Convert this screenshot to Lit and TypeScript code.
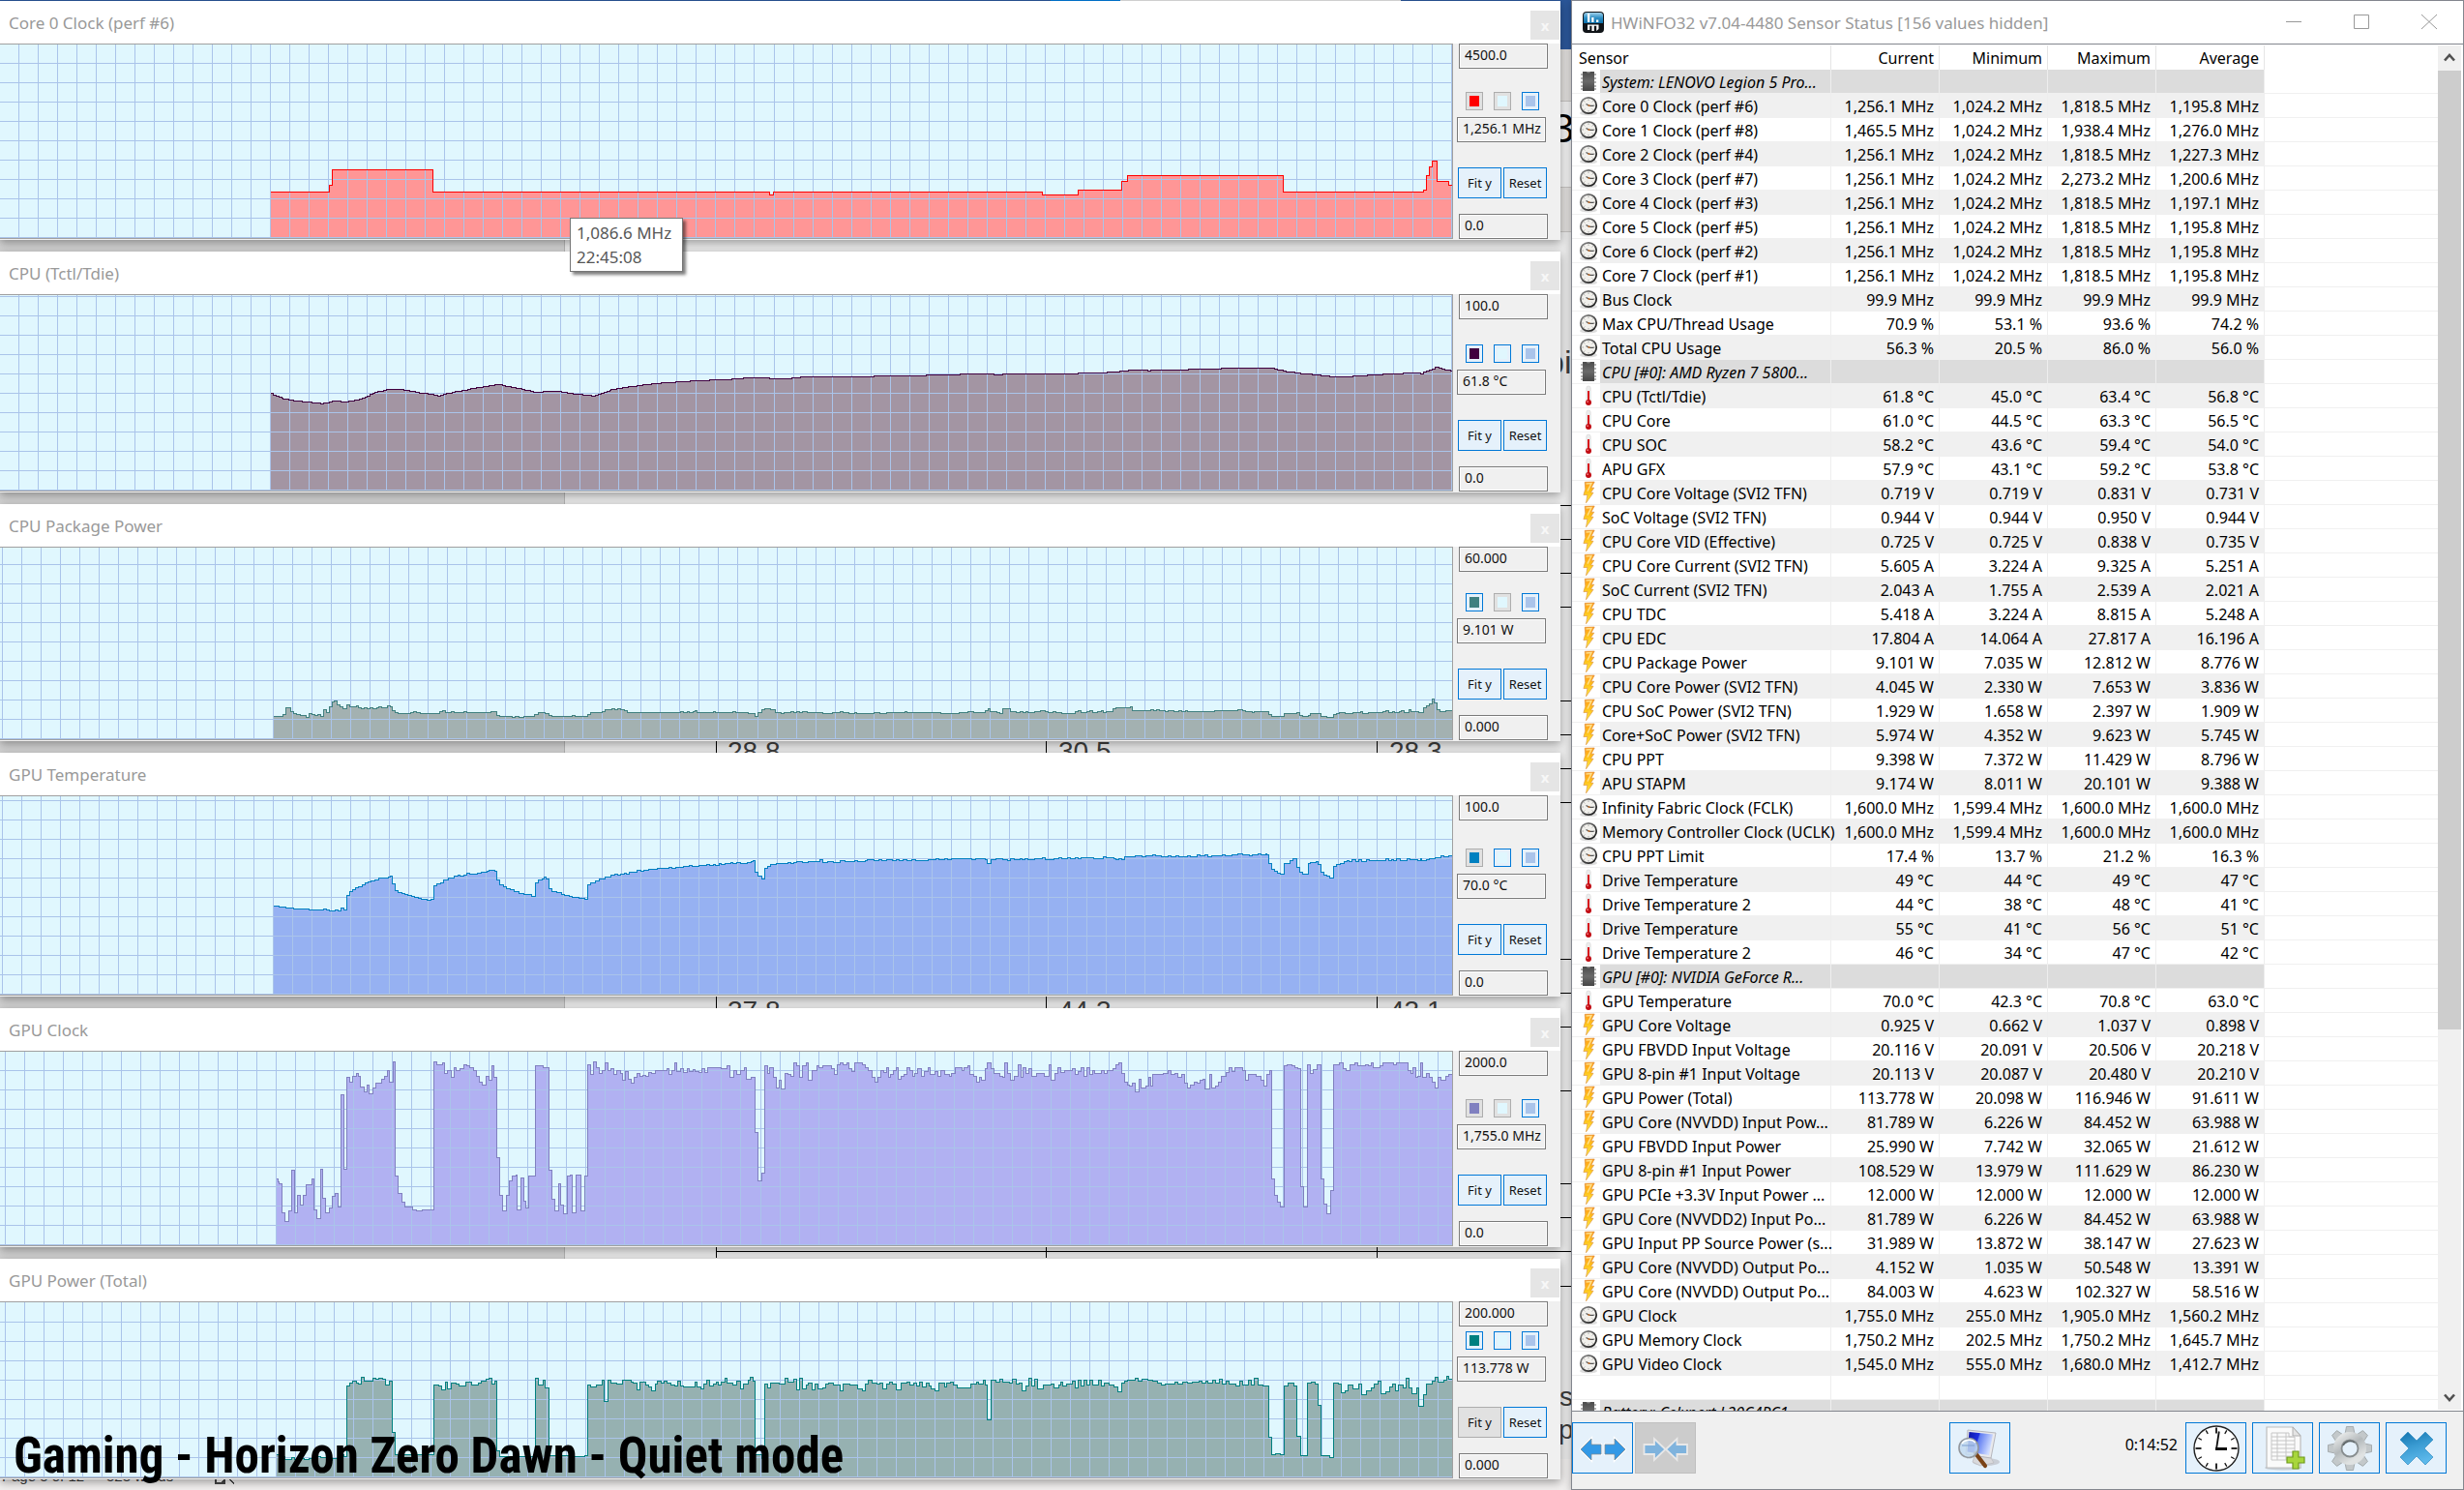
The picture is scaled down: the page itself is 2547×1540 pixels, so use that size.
import { LitElement, html, svg, css, nothing } from "lit";
import { customElement, property } from "lit/decorators.js";

type Trace = {
  title: string;
  top: string;
  value: string;
  bottom: string;
  stroke: string;
  fill: string;
  flat: boolean[];
  gridX: number;
  height: number;
  smooth?: boolean;
  fitIdle?: boolean;
  rise: number;
  early: string;
  late: string;
};

const PLOT_W = 1501;
const SPLIT = 850;
const KX_EARLY = SPLIT / 1568;
const KX_LATE = 800 / 1568;

const traces: Trace[] = [
  {
    title: "Core 0 Clock (perf #6)", top: "4500.0", value: "1,256.1 MHz", bottom: "0.0",
    stroke: "#ff0000", fill: "#ff9696", flat: [true, true, false], gridX: 19, height: 200, rise: 46,
    early: "516,595 628,574 634,526 825,595 1468,604 1475,595",
    late: "0,595 446,604 518,589 607,562 618,544 934,595 1218,589 1224,544 1230,517 1236,499 1246,562 1269,574",
  },
  {
    title: "CPU (Tctl/Tdie)", top: "100.0", value: "61.8 °C", bottom: "0.0",
    stroke: "#400040", fill: "#a395a3", flat: [false, false, false], gridX: 19, height: 202, rise: 305, smooth: true,
    early: "516,1218 522,1226 540,1237 560,1243 590,1247 612,1252 634,1244 660,1246 680,1241 700,1228 715,1217 740,1207 770,1209 800,1218 835,1227 870,1214 910,1202 948,1192 985,1204 1020,1216 1060,1213 1100,1223 1130,1228 1165,1208 1210,1197 1250,1189 1320,1181 1390,1176 1440,1170 1470,1174 1505,1173 1535,1168 1568,1168",
    late: "0,1168 100,1168 104,1165 205,1165 220,1162 330,1160 360,1162 380,1158 512,1158 590,1154 625,1148 660,1149 790,1144 840,1141 905,1141 940,1153 980,1160 1030,1168 1070,1167 1130,1161 1190,1157 1212,1158 1230,1148 1243,1138 1255,1145 1277,1150",
  },
  {
    title: "CPU Package Power", top: "60.000", value: "9.101 W", bottom: "0.000",
    stroke: "#408080", fill: "#a3b1b1", flat: [false, true, false], gridX: 2, height: 198, rise: 46,
    early: "522,661 540,655 545,634 554,646 560,652 566,655 572,658 583,664 589,652 595,655 600,658 606,655 611,661 617,640 622,649 628,631 634,616 638,613 643,625 649,631 654,637 661,625 666,631 680,628 683,634 689,637 695,634 700,637 706,634 712,637 718,634 722,631 728,634 739,628 745,631 748,643 754,649 760,652 783,649 789,646 795,649 801,652 838,646 844,643 850,649 861,646 867,649 884,646 890,649 936,646 947,658 953,661 976,664 982,661 990,664 998,661 1020,655 1027,649 1040,652 1046,658 1052,661 1092,658 1097,661 1121,655 1126,649 1149,646 1154,640 1167,637 1172,640 1178,637 1184,640 1190,643 1196,649 1298,646 1304,649 1310,646 1315,649 1321,646 1325,643 1329,649 1360,646 1365,649 1397,646 1402,649 1426,652 1440,661 1446,649 1452,640 1458,637 1470,640 1478,649 1489,652 1496,649 1508,646 1514,649 1519,646 1525,649 1531,646 1540,649",
    late: "0,652 20,649 36,646 42,649 54,652 66,649 70,652 105,649 116,652 130,649 167,646 172,649 240,652 277,649 295,646 306,649 330,643 336,637 341,646 354,649 360,652 366,637 382,646 392,649 400,646 406,649 412,646 417,649 430,646 442,643 452,646 458,649 468,646 474,649 486,652 513,646 519,643 524,649 536,646 542,643 548,649 558,646 565,643 569,649 576,646 588,637 595,634 624,631 628,643 665,640 671,643 677,640 683,643 694,646 700,643 713,646 722,643 728,646 735,643 740,646 795,643 842,640 852,643 858,646 871,649 876,646 905,655 911,661 935,652 962,649 968,658 974,661 984,658 989,652 1010,661 1022,664 1036,655 1042,652 1047,649 1060,652 1075,649 1090,646 1094,652 1106,649 1136,646 1142,643 1147,649 1155,646 1160,649 1170,646 1174,643 1178,649 1188,640 1193,646 1208,649 1218,634 1224,628 1230,622 1236,607 1240,619 1246,640 1252,646 1264,643",
  },
  {
    title: "GPU Temperature", top: "100.0", value: "70.0 °C", bottom: "0.0",
    stroke: "#0080c0", fill: "#96b1f2", flat: [true, false, false], gridX: 2, height: 205, rise: 303,
    early: "522,1249 532,1252 545,1255 560,1258 589,1261 617,1258 622,1261 628,1264 640,1261 645,1264 650,1255 655,1261 661,1216 667,1204 672,1198 678,1192 684,1189 690,1183 696,1177 702,1174 708,1171 714,1168 722,1162 740,1159 745,1156 748,1180 754,1201 760,1207 766,1210 772,1213 778,1216 784,1219 790,1222 798,1225 804,1228 815,1231 822,1228 827,1186 833,1180 840,1177 845,1168 855,1162 867,1156 873,1153 878,1156 884,1153 890,1147 896,1150 911,1147 917,1144 928,1141 933,1138 943,1141 947,1168 953,1183 960,1189 965,1195 973,1198 980,1204 990,1210 998,1213 1014,1219 1021,1177 1027,1168 1034,1165 1038,1159 1042,1165 1047,1195 1053,1204 1062,1207 1070,1213 1076,1216 1086,1219 1092,1222 1104,1225 1115,1228 1121,1183 1127,1177 1136,1171 1143,1165 1154,1159 1165,1153 1172,1150 1177,1153 1184,1150 1190,1147 1194,1150 1200,1144 1215,1138 1222,1141 1228,1138 1237,1135 1254,1132 1276,1129 1282,1132 1288,1129 1304,1126 1315,1123 1320,1126 1332,1123 1348,1120 1353,1123 1360,1120 1365,1123 1371,1117 1376,1120 1382,1117 1393,1114 1397,1117 1404,1114 1412,1117 1425,1114 1432,1111 1436,1108 1440,1144 1446,1156 1452,1165 1458,1132 1464,1126 1470,1120 1480,1117 1503,1114 1508,1117 1514,1114 1520,1111 1530,1114 1541,1111 1563,1105",
    late: "0,1114 10,1111 22,1114 36,1108 46,1111 66,1108 72,1111 88,1108 92,1105 104,1108 114,1105 120,1108 130,1105 142,1108 150,1105 156,1108 164,1105 172,1108 182,1105 190,1108 215,1105 230,1102 236,1105 248,1102 254,1105 262,1102 302,1105 310,1102 330,1105 334,1117 342,1105 352,1102 366,1105 376,1108 382,1102 390,1105 400,1102 404,1105 410,1102 416,1105 430,1102 446,1099 452,1105 470,1102 480,1099 486,1102 496,1099 502,1102 512,1099 518,1102 524,1099 550,1102 570,1096 576,1099 590,1102 594,1105 600,1102 606,1105 612,1096 635,1093 648,1096 656,1093 670,1090 676,1093 686,1096 700,1093 706,1096 717,1093 722,1096 740,1093 746,1096 760,1090 766,1093 776,1090 782,1096 788,1093 810,1090 816,1093 830,1090 842,1087 852,1090 866,1093 872,1090 882,1087 888,1090 898,1087 900,1090 905,1117 911,1135 917,1141 922,1147 929,1150 936,1117 948,1108 954,1102 962,1129 968,1144 974,1150 984,1117 989,1114 1000,1111 1005,1120 1010,1144 1016,1153 1022,1156 1028,1162 1036,1126 1042,1120 1050,1117 1058,1111 1064,1108 1068,1111 1074,1105 1080,1111 1086,1105 1092,1111 1102,1105 1108,1108 1142,1102 1148,1108 1154,1105 1158,1108 1164,1102 1172,1108 1184,1102 1190,1105 1206,1108 1212,1102 1214,1108 1224,1105 1230,1102 1242,1099 1253,1093 1260,1096 1270,1093",
  },
  {
    title: "GPU Clock", top: "2000.0", value: "1,755.0 MHz", bottom: "0.0",
    stroke: "#8080c0", fill: "#b1b1f2", flat: [true, true, false], gridX: 5, height: 200, rise: 47,
    early: "527,535 530,544 532,550 538,640 544,667 551,634 556,508 561,640 567,586 572,616 578,586 584,553 595,535 599,631 604,658 611,505 615,595 621,640 628,625 634,589 640,580 644,622 650,274 655,505 661,220 666,235 673,217 680,208 684,217 688,250 694,265 700,244 704,271 712,253 717,238 727,226 733,217 739,199 743,235 750,172 753,526 760,580 766,607 772,622 787,631 794,634 805,631 827,172 832,181 844,175 848,208 854,199 860,220 866,190 870,199 878,193 884,181 890,184 896,190 903,199 909,217 914,235 920,244 927,217 933,229 938,184 942,220 947,469 953,586 959,634 966,586 972,541 977,526 984,523 986,631 993,532 998,604 1003,625 1009,526 1021,184 1036,190 1047,508 1052,598 1058,634 1065,550 1069,616 1075,643 1082,526 1087,523 1091,640 1099,523 1108,634 1115,526 1121,181 1126,211 1132,172 1137,190 1142,208 1148,199 1154,175 1159,199 1165,193 1170,211 1176,199 1184,208 1187,229 1193,202 1199,226 1204,238 1210,220 1215,208 1220,217 1226,214 1232,217 1237,205 1243,208 1249,199 1272,193 1276,211 1282,199 1287,175 1291,202 1298,193 1303,205 1310,193 1315,202 1321,196 1326,202 1332,205 1338,193 1344,205 1350,190 1376,193 1387,184 1392,220 1400,199 1404,211 1412,199 1420,190 1424,226 1432,220 1440,391 1446,541 1452,517 1458,184 1463,208 1468,190 1475,220 1480,253 1486,229 1490,256 1497,208 1503,211 1508,217 1514,175 1520,184 1525,220 1530,184 1537,175 1541,229 1548,199 1558,184 1562,190",
    late: "0,184 18,193 24,211 30,181 36,175 42,181 50,175 54,193 60,202 66,175 82,181 88,190 94,199 100,220 106,235 112,220 118,199 124,205 130,190 134,220 138,211 144,199 149,190 153,226 160,217 166,211 172,190 178,199 184,217 188,208 194,193 200,217 206,202 214,190 218,211 228,202 234,217 240,199 247,211 258,217 262,208 270,190 284,199 288,190 294,184 298,211 306,217 312,235 318,220 322,229 330,193 335,175 342,193 348,208 360,217 366,220 370,175 376,208 382,229 390,217 396,181 402,220 406,190 412,208 418,193 424,217 434,208 450,217 460,181 464,229 472,208 478,190 484,205 490,199 506,193 512,211 518,202 524,190 530,217 536,190 542,211 548,199 552,208 566,199 572,208 578,199 588,193 594,181 600,175 606,208 612,235 618,244 622,247 628,238 634,265 641,226 646,253 656,247 662,220 666,247 670,211 690,208 700,199 706,211 714,208 720,220 728,211 734,238 740,253 746,244 754,235 760,238 766,229 772,226 776,256 784,211 788,253 796,247 802,235 808,217 818,205 824,190 830,202 836,190 852,199 858,229 864,211 880,217 888,229 894,247 900,211 906,199 910,535 916,586 922,607 929,622 936,184 942,181 952,184 958,190 964,193 969,559 975,622 983,181 988,208 995,196 1002,181 1010,535 1016,613 1022,643 1030,571 1036,181 1048,175 1056,193 1062,199 1070,181 1078,175 1084,184 1100,181 1106,184 1112,175 1116,190 1130,184 1136,175 1158,181 1164,175 1187,199 1192,208 1197,190 1202,220 1207,217 1212,175 1217,220 1224,208 1230,220 1236,235 1241,253 1247,220 1253,229 1264,217 1270,211",
  },
  {
    title: "GPU Power (Total)", top: "200.000", value: "113.778 W", bottom: "0.000",
    stroke: "#008080", fill: "#96b1b1", flat: [false, false, false], gridX: 5, height: 181, rise: 306, fitIdle: true,
    early: "527,1390 533,1396 544,1405 557,1399 562,1405 575,1402 580,1405 590,1402 600,1396 611,1399 628,1408 634,1402 650,1390 655,1396 661,1177 667,1168 673,1162 680,1168 684,1171 689,1150 694,1162 711,1153 717,1156 723,1153 730,1156 736,1174 743,1162 748,1321 753,1390 827,1174 836,1177 842,1189 850,1165 854,1186 860,1168 870,1171 876,1177 888,1165 900,1174 912,1168 918,1162 927,1156 933,1153 938,1171 943,1162 947,1378 953,1396 1021,1153 1026,1174 1036,1159 1040,1183 1047,1393 1090,1396 1115,1393 1121,1174 1126,1180 1138,1174 1148,1159 1152,1225 1160,1159 1165,1168 1176,1171 1187,1159 1204,1165 1208,1168 1214,1189 1221,1165 1232,1174 1237,1180 1243,1192 1249,1171 1254,1162 1260,1168 1266,1162 1272,1168 1280,1174 1287,1177 1292,1162 1298,1177 1304,1180 1325,1165 1330,1180 1337,1186 1342,1171 1348,1159 1353,1177 1360,1171 1366,1165 1370,1174 1376,1165 1382,1153 1386,1168 1398,1174 1404,1162 1412,1186 1418,1171 1426,1159 1431,1150 1436,1162 1440,1390 1452,1402 1458,1171 1463,1183 1470,1168 1486,1171 1497,1153 1503,1165 1514,1156 1519,1189 1525,1153 1530,1186 1537,1174 1542,1168 1548,1189 1554,1171 1560,1186",
    late: "0,1183 6,1171 12,1168 22,1174 36,1192 42,1171 56,1174 72,1186 82,1192 88,1171 94,1159 100,1168 110,1171 116,1168 122,1186 130,1171 136,1165 142,1171 150,1189 160,1168 172,1165 178,1174 186,1168 192,1177 196,1165 202,1180 210,1168 216,1177 220,1186 228,1192 236,1168 248,1180 252,1168 260,1165 266,1174 274,1183 300,1171 312,1165 316,1171 326,1159 330,1174 334,1282 342,1159 352,1165 360,1156 366,1165 380,1168 386,1156 392,1171 398,1168 404,1192 412,1177 418,1153 424,1177 430,1156 436,1186 448,1174 464,1171 470,1183 480,1174 484,1165 488,1177 494,1171 506,1162 512,1183 518,1159 524,1177 530,1159 536,1174 542,1159 548,1174 560,1159 566,1177 572,1168 582,1174 590,1180 598,1195 606,1168 612,1162 618,1159 634,1153 640,1162 648,1156 660,1159 670,1162 680,1168 686,1174 694,1171 714,1165 720,1171 730,1165 740,1168 750,1165 764,1162 770,1168 778,1162 782,1168 790,1159 796,1168 804,1156 810,1171 818,1162 824,1171 838,1177 846,1162 852,1174 864,1159 870,1174 876,1153 882,1174 892,1177 905,1336 911,1390 918,1387 928,1390 936,1177 944,1168 956,1177 962,1333 969,1393 983,1168 990,1165 998,1171 1004,1237 1010,1393 1028,1399 1036,1168 1046,1171 1052,1198 1060,1192 1066,1174 1076,1186 1086,1171 1092,1204 1102,1192 1112,1183 1118,1171 1126,1162 1132,1201 1142,1195 1150,1180 1156,1171 1162,1192 1168,1174 1176,1183 1182,1153 1188,1183 1194,1201 1204,1183 1209,1240 1218,1204 1224,1171 1236,1162 1242,1150 1248,1165 1260,1159 1266,1147 1270,1156",
  },
];

/* Turns both halves of a recording into [x, y] plot pixels. */
function samples(t: Trace): number[][] {
  const read = (s: string, x0: number, kx: number) =>
    s.split(" ").map((p) => {
      const [x, y] = p.split(",").map(Number);
      return [x0 + Math.floor(x * kx), y / 3 - t.rise];
    });
  const pts = [...read(t.early, 0, KX_EARLY), ...read(t.late, SPLIT, KX_LATE)];
  if (!t.smooth) return pts.map(([x, y]) => [x, Math.floor(y)]);
  const out: number[][] = [];
  for (let i = 0; i < pts.length - 1; i++) {
    const [x1, y1] = pts[i];
    const [x2, y2] = pts[i + 1];
    for (let x = x1; x < x2; x += 3) out.push([x, Math.floor(y1 + ((y2 - y1) * (x - x1)) / (x2 - x1))]);
  }
  return out;
}

function stepPath(pts: number[][]): string {
  let d = `M${pts[0][0] + 0.5} ${pts[0][1] + 0.5}`;
  for (const [x, y] of pts.slice(1)) d += `H${x + 0.5}V${y + 0.5}`;
  return d + `H${PLOT_W}`;
}

@customElement("trace-window")
class TraceWindow extends LitElement {
  @property({ attribute: false }) trace!: Trace;

  static styles = css`
    :host {
      display: flex;
      flex-direction: column;
      min-width: 0;
      min-height: 0;
      background: #f0f0f0;
      box-shadow: 0 3px 9px rgba(0, 0, 0, 0.35);
      font-family: "Noto Sans", "Open Sans", sans-serif;
    }
    .bar {
      flex: 0 0 44px;
      display: flex;
      align-items: center;
      justify-content: space-between;
      padding: 0 1px 0 9px;
      background: #fff;
    }
    .title { margin: 0; padding-top: 2px; font-size: 17px; font-weight: 400; line-height: 24px; color: #999; }
    .close {
      width: 30px; height: 30px; padding: 0; margin-top: 6px;
      border: 0; background: #e5e5e5; color: #f7f7f7;
      font: 700 15px/28px "Noto Sans", sans-serif;
    }
    .body { flex: 1; min-height: 0; display: grid; grid-template-columns: minmax(0, 1fr) 111px; }
    .plot {
      min-height: 0;
      margin-bottom: 1px;
      border: solid #a0a0a0;
      border-width: 1px 1px 1px 0;
      background: #e0f7fe;
    }
    .plot svg { display: block; width: 100%; height: 100%; }
    .side { display: flex; flex-direction: column; align-items: flex-start; padding: 0 0 1px 4px; }
    .field {
      box-sizing: border-box; width: 92px; height: 26px; padding: 0 0 3px 5px;
      border: 1px solid #7a7a7a; box-shadow: inset 0 0 0 1px #fff; background: #f0f0f0;
      font: 14px/20px "Noto Sans", sans-serif; color: #111;
    }
    .limit { margin-left: 2px; }
    .swatches { display: flex; margin-top: auto; padding-left: 9px; gap: 11px; }
    .swatch {
      box-sizing: border-box; width: 18px; height: 19px; padding: 3px;
      border: 1px solid #0078d7; background: #e5f1fb;
    }
    .swatch.flat { border-color: #adadad; background: #e1e1e1; }
    .chip { display: block; height: 100%; }
    .value { margin: 7px 0 26px; }
    .actions { display: flex; gap: 2px; margin: 0 0 16px 1px; }
    .act {
      box-sizing: border-box; width: 45px; height: 32px; padding: 0 0 1px;
      border: 1px solid #0078d7; background: #e5f1fb;
      font: 13px/20px "Noto Sans", sans-serif; color: #111;
    }
    .act.flat { border-color: #adadad; background: #e1e1e1; }
  `;

  render() {
    const t = this.trace;
    const line = stepPath(samples(t));
    const start = line.slice(1).split(" ")[0];
    let grid = "";
    for (let k = 0; ; k++) {
      const x = t.gridX + Math.round(k * 20.013);
      if (x >= PLOT_W) break;
      grid += `M${x + 0.5} 0V${t.height}`;
    }
    for (let y = t.height - 1; y > 0; y -= 20) grid += `M0 ${y + 0.5}H${PLOT_W}`;
    const colors = [t.stroke, "#e0f7fe", "#aac4ea"];
    return html`
      <header class="bar">
        <h2 class="title">${t.title}</h2>
        <button class="close" aria-label="Close">x</button>
      </header>
      <div class="body">
        <div class="plot">
          <svg viewBox="0 0 ${PLOT_W} ${t.height}" preserveAspectRatio="none" shape-rendering="crispEdges" role="img" aria-label=${t.title}>
            <path d="${line}V${t.height}H${start}Z" fill=${t.fill}></path>
            <path d=${grid} stroke="#aac4ea" fill="none"></path>
            <path d=${line} stroke=${t.stroke} fill="none"></path>
          </svg>
        </div>
        <div class="side">
          <input class="field limit" aria-label="Upper limit" .value=${t.top} />
          <div class="swatches">
            ${colors.map((c, i) => html`
              <button class="swatch ${t.flat[i] ? "flat" : ""}" aria-label="Color ${i + 1}">
                <span class="chip" style="background:${c}"></span>
              </button>`)}
          </div>
          <input class="field value" aria-label="Current value" readonly .value=${t.value} />
          <div class="actions">
            <button class="act ${t.fitIdle ? "flat" : ""}">Fit y</button>
            <button class="act">Reset</button>
          </div>
          <input class="field limit" aria-label="Lower limit" .value=${t.bottom} />
        </div>
      </div>`;
  }
}

type Row = string[];
const rows: Row[] = [
  ["chip", "System: LENOVO Legion 5 Pro..."],
  ["dial", "Core 0 Clock (perf #6)", "1,256.1 MHz", "1,024.2 MHz", "1,818.5 MHz", "1,195.8 MHz"],
  ["dial", "Core 1 Clock (perf #8)", "1,465.5 MHz", "1,024.2 MHz", "1,938.4 MHz", "1,276.0 MHz"],
  ["dial", "Core 2 Clock (perf #4)", "1,256.1 MHz", "1,024.2 MHz", "1,818.5 MHz", "1,227.3 MHz"],
  ["dial", "Core 3 Clock (perf #7)", "1,256.1 MHz", "1,024.2 MHz", "2,273.2 MHz", "1,200.6 MHz"],
  ["dial", "Core 4 Clock (perf #3)", "1,256.1 MHz", "1,024.2 MHz", "1,818.5 MHz", "1,197.1 MHz"],
  ["dial", "Core 5 Clock (perf #5)", "1,256.1 MHz", "1,024.2 MHz", "1,818.5 MHz", "1,195.8 MHz"],
  ["dial", "Core 6 Clock (perf #2)", "1,256.1 MHz", "1,024.2 MHz", "1,818.5 MHz", "1,195.8 MHz"],
  ["dial", "Core 7 Clock (perf #1)", "1,256.1 MHz", "1,024.2 MHz", "1,818.5 MHz", "1,195.8 MHz"],
  ["dial", "Bus Clock", "99.9 MHz", "99.9 MHz", "99.9 MHz", "99.9 MHz"],
  ["dial", "Max CPU/Thread Usage", "70.9 %", "53.1 %", "93.6 %", "74.2 %"],
  ["dial", "Total CPU Usage", "56.3 %", "20.5 %", "86.0 %", "56.0 %"],
  ["chip", "CPU [#0]: AMD Ryzen 7 5800..."],
  ["temp", "CPU (Tctl/Tdie)", "61.8 °C", "45.0 °C", "63.4 °C", "56.8 °C"],
  ["temp", "CPU Core", "61.0 °C", "44.5 °C", "63.3 °C", "56.5 °C"],
  ["temp", "CPU SOC", "58.2 °C", "43.6 °C", "59.4 °C", "54.0 °C"],
  ["temp", "APU GFX", "57.9 °C", "43.1 °C", "59.2 °C", "53.8 °C"],
  ["bolt", "CPU Core Voltage (SVI2 TFN)", "0.719 V", "0.719 V", "0.831 V", "0.731 V"],
  ["bolt", "SoC Voltage (SVI2 TFN)", "0.944 V", "0.944 V", "0.950 V", "0.944 V"],
  ["bolt", "CPU Core VID (Effective)", "0.725 V", "0.725 V", "0.838 V", "0.735 V"],
  ["bolt", "CPU Core Current (SVI2 TFN)", "5.605 A", "3.224 A", "9.325 A", "5.251 A"],
  ["bolt", "SoC Current (SVI2 TFN)", "2.043 A", "1.755 A", "2.539 A", "2.021 A"],
  ["bolt", "CPU TDC", "5.418 A", "3.224 A", "8.815 A", "5.248 A"],
  ["bolt", "CPU EDC", "17.804 A", "14.064 A", "27.817 A", "16.196 A"],
  ["bolt", "CPU Package Power", "9.101 W", "7.035 W", "12.812 W", "8.776 W"],
  ["bolt", "CPU Core Power (SVI2 TFN)", "4.045 W", "2.330 W", "7.653 W", "3.836 W"],
  ["bolt", "CPU SoC Power (SVI2 TFN)", "1.929 W", "1.658 W", "2.397 W", "1.909 W"],
  ["bolt", "Core+SoC Power (SVI2 TFN)", "5.974 W", "4.352 W", "9.623 W", "5.745 W"],
  ["bolt", "CPU PPT", "9.398 W", "7.372 W", "11.429 W", "8.796 W"],
  ["bolt", "APU STAPM", "9.174 W", "8.011 W", "20.101 W", "9.388 W"],
  ["dial", "Infinity Fabric Clock (FCLK)", "1,600.0 MHz", "1,599.4 MHz", "1,600.0 MHz", "1,600.0 MHz"],
  ["dial", "Memory Controller Clock (UCLK)", "1,600.0 MHz", "1,599.4 MHz", "1,600.0 MHz", "1,600.0 MHz"],
  ["dial", "CPU PPT Limit", "17.4 %", "13.7 %", "21.2 %", "16.3 %"],
  ["temp", "Drive Temperature", "49 °C", "44 °C", "49 °C", "47 °C"],
  ["temp", "Drive Temperature 2", "44 °C", "38 °C", "48 °C", "41 °C"],
  ["temp", "Drive Temperature", "55 °C", "41 °C", "56 °C", "51 °C"],
  ["temp", "Drive Temperature 2", "46 °C", "34 °C", "47 °C", "42 °C"],
  ["chip", "GPU [#0]: NVIDIA GeForce R..."],
  ["temp", "GPU Temperature", "70.0 °C", "42.3 °C", "70.8 °C", "63.0 °C"],
  ["bolt", "GPU Core Voltage", "0.925 V", "0.662 V", "1.037 V", "0.898 V"],
  ["bolt", "GPU FBVDD Input Voltage", "20.116 V", "20.091 V", "20.506 V", "20.218 V"],
  ["bolt", "GPU 8-pin #1 Input Voltage", "20.113 V", "20.087 V", "20.480 V", "20.210 V"],
  ["bolt", "GPU Power (Total)", "113.778 W", "20.098 W", "116.946 W", "91.611 W"],
  ["bolt", "GPU Core (NVVDD) Input Pow...", "81.789 W", "6.226 W", "84.452 W", "63.988 W"],
  ["bolt", "GPU FBVDD Input Power", "25.990 W", "7.742 W", "32.065 W", "21.612 W"],
  ["bolt", "GPU 8-pin #1 Input Power", "108.529 W", "13.979 W", "111.629 W", "86.230 W"],
  ["bolt", "GPU PCIe +3.3V Input Power ...", "12.000 W", "12.000 W", "12.000 W", "12.000 W"],
  ["bolt", "GPU Core (NVVDD2) Input Po...", "81.789 W", "6.226 W", "84.452 W", "63.988 W"],
  ["bolt", "GPU Input PP Source Power (s...", "31.989 W", "13.872 W", "38.147 W", "27.623 W"],
  ["bolt", "GPU Core (NVVDD) Output Po...", "4.152 W", "1.035 W", "50.548 W", "13.391 W"],
  ["bolt", "GPU Core (NVVDD) Output Po...", "84.003 W", "4.623 W", "102.327 W", "58.516 W"],
  ["dial", "GPU Clock", "1,755.0 MHz", "255.0 MHz", "1,905.0 MHz", "1,560.2 MHz"],
  ["dial", "GPU Memory Clock", "1,750.2 MHz", "202.5 MHz", "1,750.2 MHz", "1,645.7 MHz"],
  ["dial", "GPU Video Clock", "1,545.0 MHz", "555.0 MHz", "1,680.0 MHz", "1,412.7 MHz"],
  ["", ""],
  ["chip", "Battery: Celxpert L20C4PC1"],
];

const ticks = Array.from({ length: 12 }, (_, i) => i);
const gearTeeth = Array.from({ length: 8 }, (_, i) => i * 45);

@customElement("sensor-window")
class SensorWindow extends LitElement {
  static styles = css`
    :host {
      display: flex;
      flex-direction: column;
      min-width: 0;
      min-height: 0;
      border: 1px solid #83868e;
      background: #f0f0f0;
      box-shadow: 0 2px 8px rgba(0, 0, 0, 0.3);
      font-family: "Noto Sans", "Open Sans", sans-serif;
      color: #000;
    }
    .defs { position: absolute; width: 0; height: 0; }
    .bar { flex: 0 0 44px; display: flex; align-items: center; background: #fff; padding-left: 11px; gap: 7px; }
    .logo { width: 22px; height: 22px; }
    .title { flex: 1; margin: 0; padding-top: 2px; font-size: 17px; font-weight: 400; line-height: 24px; color: #999; white-space: nowrap; }
    .caps { display: flex; }
    .cap { width: 70px; height: 44px; padding: 0; border: 0; background: none; }
    .cap svg { display: block; width: 18px; height: 18px; margin: 0 auto; }
    .list { flex: 1; min-height: 0; display: flex; border: solid #83868e; border-width: 1px 0; background: #fff; }
    .scroll { flex: 1; min-width: 0; overflow: hidden; padding-top: 1px; }
    .grid { width: 100%; border-collapse: separate; border-spacing: 0; table-layout: fixed; font-size: 16px; line-height: 24px; }
    .grid th { height: 25px; padding: 0 5px 0 0; text-align: right; font-weight: 400; border-right: 1px solid #e5e5e5; }
    .grid .first { text-align: left; padding-left: 7px; }
    .grid .fill { border-right: 0; padding: 0; }
    .grid td {
      box-sizing: border-box; height: 25px; padding: 2px 5px 0 0; line-height: 22px;
      text-align: right; white-space: nowrap;
      border-right: 1px solid #eee; border-bottom: 1px solid #f0f0f0;
    }
    .grid .icon { padding: 0 0 0 7px; border-right: 0; text-align: left; line-height: 0; }
    .icon svg { width: 21px; height: 24px; }
    .grid .name { position: relative; padding-left: 2px; padding-right: 0; text-align: left; }
    .odd .cell { background: #f0f0f0; }
    .group .cell { background: #dcdcdc; }
    .group .name { font-style: italic; }
    .c-icon { width: 29px; }
    .c-name { width: 239px; }
    .c-val { width: 112px; }
    .track { flex: 0 0 24px; margin: 1px 2px 1px 0; display: flex; flex-direction: column; background: #f0f0f0; }
    .arrow { flex: 0 0 26px; padding: 0; border: 0; background: none; }
    .arrow svg { display: block; width: 12px; height: 12px; margin: 0 auto; }
    .rail { flex: 1; }
    .thumb { height: 73%; background: #cdcdcd; }
    .tools {
      flex: 0 0 80px; box-sizing: border-box; display: grid; padding: 11px 17px 0 0;
      grid-template-columns: auto 261fr auto 118fr auto; align-items: start;
    }
    .set { display: flex; gap: 6px; }
    .set.tight { gap: 2px; }
    .tool { width: 63px; height: 53px; padding: 0; border: 1px solid #0078d7; background: #e5f1fb; }
    .tool svg { display: block; width: 48px; height: 48px; margin: 0 auto; }
    .tool:disabled { border-color: #bfbfbf; background: #ccc; }
    .time { font-size: 16px; line-height: 46px; margin-right: 2px; }
  `;

  render() {
    return html`
      <svg class="defs" aria-hidden="true">
        <defs>
          <linearGradient id="gChip" x1="0" y1="0" x2="0" y2="1"><stop offset="0" stop-color="#4c4c4c"/><stop offset=".5" stop-color="#6a6a6a"/><stop offset="1" stop-color="#454545"/></linearGradient>
          <linearGradient id="gDial" x1="0" y1="0" x2="1" y2="1"><stop offset="0" stop-color="#8d8d8d"/><stop offset="1" stop-color="#111"/></linearGradient>
          <linearGradient id="gBolt" x1="0" y1="0" x2="0" y2="1"><stop offset="0" stop-color="#ff9a1f"/><stop offset=".45" stop-color="#ffc21a"/><stop offset="1" stop-color="#fff04a"/></linearGradient>
          <symbol id="chip" viewBox="0 0 21 24">
            <path d="M2 5h16M2 9h16M2 13h16M2 17h16M2 20h16" stroke="#9a9a9a" stroke-width="1.6"/>
            <path d="M4 2h12v20H4z" fill="url(#gChip)"/><path d="M8 2a2 1.6 0 0 0 4 0z" fill="#8b8b8b"/>
          </symbol>
          <symbol id="dial" viewBox="0 0 21 24">
            <ellipse cx="10" cy="20" rx="9" ry="2.5" fill="#ddd"/>
            <circle cx="10" cy="12" r="8.2" fill="#f1f0ec" stroke="url(#gDial)" stroke-width="1.8"/>
            <path d="M10 5.5v1.3M10 17.2v1.3M3.5 12h1.3M15.2 12h1.3M5.5 7.5l.8.8M14.5 7.5l-.8.8M5.5 16.5l.8-.8M14.5 16.5l-.8-.8" stroke="#999" stroke-width="1"/>
            <path d="M10.500 12.300h5M7.500 10.500l3.500 1.800" stroke="#555" stroke-width="1.300"/><circle cx="10.500" cy="12" r="1.100" fill="#c7783a"/>
          </symbol>
          <symbol id="temp" viewBox="0 0 21 24">
            <rect x="7.800" y="2" width="4.400" height="17" rx="2.200" fill="#ececec" stroke="#d5d5d5" stroke-width=".6"/>
            <path d="M9 7h2v11H9z" fill="#d8141c"/><circle cx="10" cy="19" r="3" fill="#c20d14"/><circle cx="9.100" cy="18.200" r=".9" fill="#f27a7d"/>
          </symbol>
          <symbol id="bolt" viewBox="0 0 21 24">
            <path d="M6.200 1.300L16.200 1l-3.400 6.200h3L12.300 12l2.700.3L7.500 22.800l1.400-8.400-4 .2 1.800-6.200z" fill="url(#gBolt)" stroke="#d98a35" stroke-width=".6"/>
            <path d="M7.500 3l5.500-.4-4 8" fill="none" stroke="#ffe08a" stroke-width="1.400"/>
          </symbol>
        </defs>
      </svg>
      <header class="bar">
        <svg class="logo" viewBox="0 0 22 22" aria-hidden="true">
          <defs><linearGradient id="gLogo" x1="0" y1="0" x2="0" y2="1"><stop offset="0" stop-color="#9fd0ea"/><stop offset=".5" stop-color="#2f8fc4"/><stop offset="1" stop-color="#0c6ea8"/></linearGradient></defs>
          <rect width="22" height="22" rx="4" fill="#101418"/>
          <path d="M1 12V4a3 3 0 0 1 3-3h14a3 3 0 0 1 3 3v8z" fill="url(#gLogo)"/>
          <path d="M5 2h2.300v9H5zM9.200 6h2.300v5H9.200zM14 8.500h2.300V11H14zM5 13.500h11.500v1.300H5zM5 14h2.300v5H5zM9.400 14h2.400v6H9.400zM14.200 14h2.300v4l-2.300 2z" fill="#fff"/>
        </svg>
        <h1 class="title">HWiNFO32 v7.04-4480 Sensor Status [156 values hidden]</h1>
        <div class="caps">
          <button class="cap" aria-label="Minimize"><svg viewBox="0 0 18 18"><path d="M1 8.500h16" stroke="#999"/></svg></button>
          <button class="cap" aria-label="Maximize"><svg viewBox="0 0 18 18"><path d="M1.500 1.500h15v14h-15z" stroke="#999" fill="none"/></svg></button>
          <button class="cap" aria-label="Close"><svg viewBox="0 0 18 18"><path d="M1 1l16 15M17 1L1 16" stroke="#999" fill="none"/></svg></button>
        </div>
      </header>
      <div class="list">
        <div class="scroll">
          <table class="grid">
            <colgroup><col class="c-icon" /><col class="c-name" /><col class="c-val" /><col class="c-val" /><col class="c-val" /><col class="c-val" /><col /></colgroup>
            <thead>
              <tr><th class="first" colspan="2">Sensor</th><th>Current</th><th>Minimum</th><th>Maximum</th><th>Average</th><th class="fill"></th></tr>
            </thead>
            <tbody>
              ${rows.map(([kind, name, ...vals], i) => html`
                <tr class=${kind === "chip" ? "group" : kind && i % 2 ? "odd" : ""}>
                  <td class="icon">${kind ? html`<svg aria-hidden="true"><use href="#${kind}"></use></svg>` : nothing}</td>
                  <td class="cell name">${name}</td>
                  ${[0, 1, 2, 3].map((c) => html`<td class="cell">${vals[c] ?? ""}</td>`)}
                  <td class="fill"></td>
                </tr>`)}
            </tbody>
          </table>
        </div>
        <div class="track">
          <button class="arrow" aria-label="Scroll up"><svg viewBox="0 0 12 12"><path d="M1 8.500L6 3l5 5.500" fill="none" stroke="#505050" stroke-width="2.600"/></svg></button>
          <div class="rail"><div class="thumb"></div></div>
          <button class="arrow" aria-label="Scroll down"><svg viewBox="0 0 12 12"><path d="M1 3.500L6 9l5-5.500" fill="none" stroke="#505050" stroke-width="2.600"/></svg></button>
        </div>
      </div>
      <footer class="tools">
        <div class="set tight">
          <button class="tool" aria-label="Expand columns">
            <svg viewBox="0 0 48 48"><g fill="#3399e6" stroke="#fff" stroke-width="2.400" stroke-linejoin="miter"><path d="M1 25l11-11v6h10v10H12v6z"/><path d="M47 25L36 14v6H26v10h10v6z"/></g><g fill="#3399e6" stroke="#7a8a98" stroke-width=".8"><path d="M1 25l11-11v6h10v10H12v6z"/><path d="M47 25L36 14v6H26v10h10v6z"/></g></svg>
          </button>
          <button class="tool" disabled aria-label="Shrink columns">
            <svg viewBox="0 0 48 48"><g fill="#7fb3dd" stroke="#e8e8e8" stroke-width="1.800"><path d="M23.500 25L12 14v6H1.500v10H12v6z"/><path d="M24 25l11.500-11v6H46v10H35.500v6z"/></g></svg>
          </button>
        </div>
        <span></span>
        <button class="tool" aria-label="System summary">
          <svg viewBox="0 0 48 48">
            <defs>
              <linearGradient id="gScr" x1="0" y1="0" x2="1" y2=".3"><stop offset="0" stop-color="#0a12a0"/><stop offset=".45" stop-color="#1f2fe0"/><stop offset=".5" stop-color="#5f7cf2"/><stop offset="1" stop-color="#cfdcff"/></linearGradient>
            </defs>
            <ellipse cx="30" cy="38" rx="14" ry="4" fill="#c9ced6"/>
            <path d="M18 32h16l4 7-14 3-8-4z" fill="#d9d9dc" stroke="#b5b5b9" stroke-width=".6"/>
            <path d="M11 5l29 3-5 26-26-4z" fill="#e9e9ec" stroke="#a8a8ae" stroke-width=".8"/>
            <path d="M12.500 7L37 9.600 33 31 10.500 27.500z" fill="url(#gScr)"/>
            <path d="M19 29l10 13" stroke="#7a4317" stroke-width="4.200" stroke-linecap="round"/>
            <circle cx="12" cy="23.500" r="10" fill="#c3dbf0" fill-opacity=".85" stroke="#93989e" stroke-width="1.600"/>
            <path d="M5 21h13" stroke="#7d9fd0" stroke-width="1"/><path d="M5 19a8 6 0 0 1 14-1" fill="none" stroke="#fff" stroke-width="1.500"/>
          </svg>
        </button>
        <span></span>
        <div class="set">
          <span class="time">0:14:52</span>
          <button class="tool" aria-label="Reset clock">
            <svg viewBox="0 0 48 48"><circle cx="24" cy="24" r="23" fill="#fff" stroke="#222" stroke-width="1.400"/>
              ${ticks.map((i) => svg`<path d="M24 2.500V${i % 3 ? 6.5 : 8.5}" stroke="#111" stroke-width=${i % 3 ? 1.3 : 1.8} transform="rotate(${i * 30} 24 24)"/>`)}
              <path d="M24 25L26.800 6.500" stroke="#111" stroke-width="1.800"/><path d="M23 24.500h12" stroke="#111" stroke-width="3"/></svg>
          </button>
          <button class="tool" aria-label="Log to file">
            <svg viewBox="0 0 48 48">
              <ellipse cx="24" cy="44" rx="19" ry="2.500" fill="#c8d0d8"/>
              <path d="M7 2h27l8 9v33H7z" fill="#fafafa" stroke="#bdbdbd" stroke-width="1.200"/>
              <path d="M34 2v9h8z" fill="#e4e4e4" stroke="#b0b0b0" stroke-width="1"/>
              <path d="M12 8h18v4h6v24H12zM12 12h24M12 16h24M12 20h24M12 24h24M12 28h24M12 32h24M18 8v28M27 8v28" fill="none" stroke="#c6c6c6" stroke-width="1"/>
              <path d="M34 27h6v6h6v6h-6v6h-6v-6h-6v-6h6z" fill="#a8d63c" stroke="#6f9a1c" stroke-width="1.200"/>
            </svg>
          </button>
          <button class="tool" aria-label="Settings">
            <svg viewBox="0 0 48 48">
              <defs><linearGradient id="gGear" x1="0" y1="0" x2=".6" y2="1"><stop offset="0" stop-color="#e6e8e8"/><stop offset=".5" stop-color="#b4b9bb"/><stop offset="1" stop-color="#dfe2e2"/></linearGradient></defs>
              ${gearTeeth.map((a) => svg`<path d="M19 9l1.500-7.500h7L29 9z" fill="#c3c8ca" stroke="#9aa0a2" stroke-width=".8" transform="rotate(${a} 24 24)"/>`)}
              <circle cx="24" cy="24" r="12.500" fill="none" stroke="url(#gGear)" stroke-width="9"/>
              <circle cx="24" cy="24" r="8.500" fill="#e5f1fb" stroke="#878d8f" stroke-width="1.800"/>
              <path d="M17 21a8 8 0 0 1 12-3" fill="none" stroke="#5f6668" stroke-width="1.500"/>
            </svg>
          </button>
          <button class="tool" aria-label="Close sensors">
            <svg viewBox="0 0 48 48">
              <defs><linearGradient id="gX" x1="0" y1="0" x2=".3" y2="1"><stop offset="0" stop-color="#1273ad"/><stop offset=".5" stop-color="#3a9bd2"/><stop offset="1" stop-color="#5cb8ea"/></linearGradient></defs>
              <path d="M7 15l8-8 9 9 9-9 8 8-9 9 9 9-8 8-9-9-9 9-8-8 9-9z" fill="url(#gX)" stroke="#3d93c6" stroke-width=".8"/>
            </svg>
          </button>
        </div>
      </footer>`;
  }
}

const edgeTicks = [522, 557, 592, 627, 724, 759, 794, 829, 991, 1026, 1061, 1127, 1223, 1258, 1329];
/* x, baseline, size class, text */
const cellTexts: [number, number, string, string][] = [
  [752, 786, "cell", "28.8"], [1094, 786, "cell", "30.5"], [1436, 786, "cell", "28.3"],
  [752, 1054, "cell", "37.8"], [1094, 1054, "cell", "44.3"], [1436, 1054, "cell", "43.1"],
  [752, 1320, "cell", "31.8"], [1094, 1320, "cell", "30.7"], [1436, 1320, "cell", "30.8"],
  [1604, 147, "head", "3"], [1598, 386, "sub", "pi"], [1612, 1453, "cell", "s"], [1611, 1487, "cell", "p"],
  [2, 1531, "status", "Page 5 of 12"], [110, 1531, "status", "523 words"],
];

@customElement("app-root")
class AppRoot extends LitElement {
  static styles = css`
    :host { display: block; font-family: "Noto Sans", "Open Sans", sans-serif; }
    .desk {
      position: relative;
      box-sizing: border-box;
      height: 100vh;
      overflow: hidden;
      display: grid;
      grid-template-columns: minmax(0, 1613fr) minmax(0, 923fr);
      column-gap: 11px;
      background: #ebebeb;
    }
    .sheet { position: absolute; inset: 0; width: 100%; height: 100%; }
    .sheet text { font-family: "Liberation Sans", sans-serif; fill: #3c3c3c; }
    .sheet .cell { font-size: 28px; }
    .sheet .head { font-size: 42px; fill: #000; }
    .sheet .sub { font-size: 34px; }
    .sheet .status { font-size: 15px; }
    .stack {
      position: relative;
      min-height: 0;
      display: grid;
      grid-template-rows: 247fr 249fr 245fr 252fr 247fr 228fr;
      row-gap: 12px;
      padding: 1px 0 11px;
    }
    .sensors { position: relative; }
    .tip {
      position: absolute; left: 589px; top: 225px; padding: 2px 11px 2px 6px;
      border: 1px solid #767676; background: #fff; box-shadow: 3px 3px 3px rgba(0, 0, 0, 0.5);
      font-size: 17px; line-height: 25px; color: #575757;
    }
    .tip p { margin: 0; }
    .caption {
      position: absolute; left: 14px; bottom: 5px; margin: 0; white-space: nowrap;
      font: 700 51px/60px "Liberation Sans Narrow", "Roboto Condensed", "Open Sans Condensed", "DejaVu Sans Condensed", sans-serif;
      color: #000;
    }
  `;

  render() {
    return html`
      <main class="desk">
        <svg class="sheet" viewBox="0 0 2547 1540" preserveAspectRatio="none" shape-rendering="crispEdges" aria-hidden="true">
          <path d="M0 0h2547v51H0z" fill="#2b579a"/>
          <path d="M1086 0h72v2h-72z" fill="#0078d7"/><path d="M1158 0h290v2h-290z" fill="#e1e1e1"/>
          <path d="M1600 51h30v188h-30z" fill="#e1dfdd"/><path d="M1600 105h30v88h-30z" fill="#f1f1f1"/>
          <path d="M1600 104.500h30M1600 193.500h30M1600 239.500h30" stroke="#c6c4c2"/>
          <path d="M0 240h583v1290H0z" fill="#d3d3d3"/><path d="M583.500 240v1290" stroke="#b5b5b5"/>
          <path d="M740.500 760v540M1081.500 760v540M1423.500 760v540M740 1293.500h890" stroke="#000"/>
          <path d="${edgeTicks.map((y) => `M1600 ${y + 0.5}h30`).join("")}" stroke="#000"/>
          <path d="M1600 1508h30v32h-30zM0 1529h1624v11H0z" fill="#f1efee"/>
          ${cellTexts.map(([x, y, size, s]) => svg`<text class=${size} x=${x} y=${y}>${s}</text>`)}
          <path d="M223 1525v8h9v-5M228 1533l12-10M233 1525l9 8" stroke="#444" fill="none" stroke-width="1.500"/>
        </svg>
        <section class="stack">${traces.map((t) => html`<trace-window .trace=${t}></trace-window>`)}</section>
        <sensor-window class="sensors"></sensor-window>
        <div class="tip" role="tooltip"><p>1,086.6 MHz</p><p>22:45:08</p></div>
        <p class="caption">Gaming - Horizon Zero Dawn - Quiet mode</p>
      </main>`;
  }
}
